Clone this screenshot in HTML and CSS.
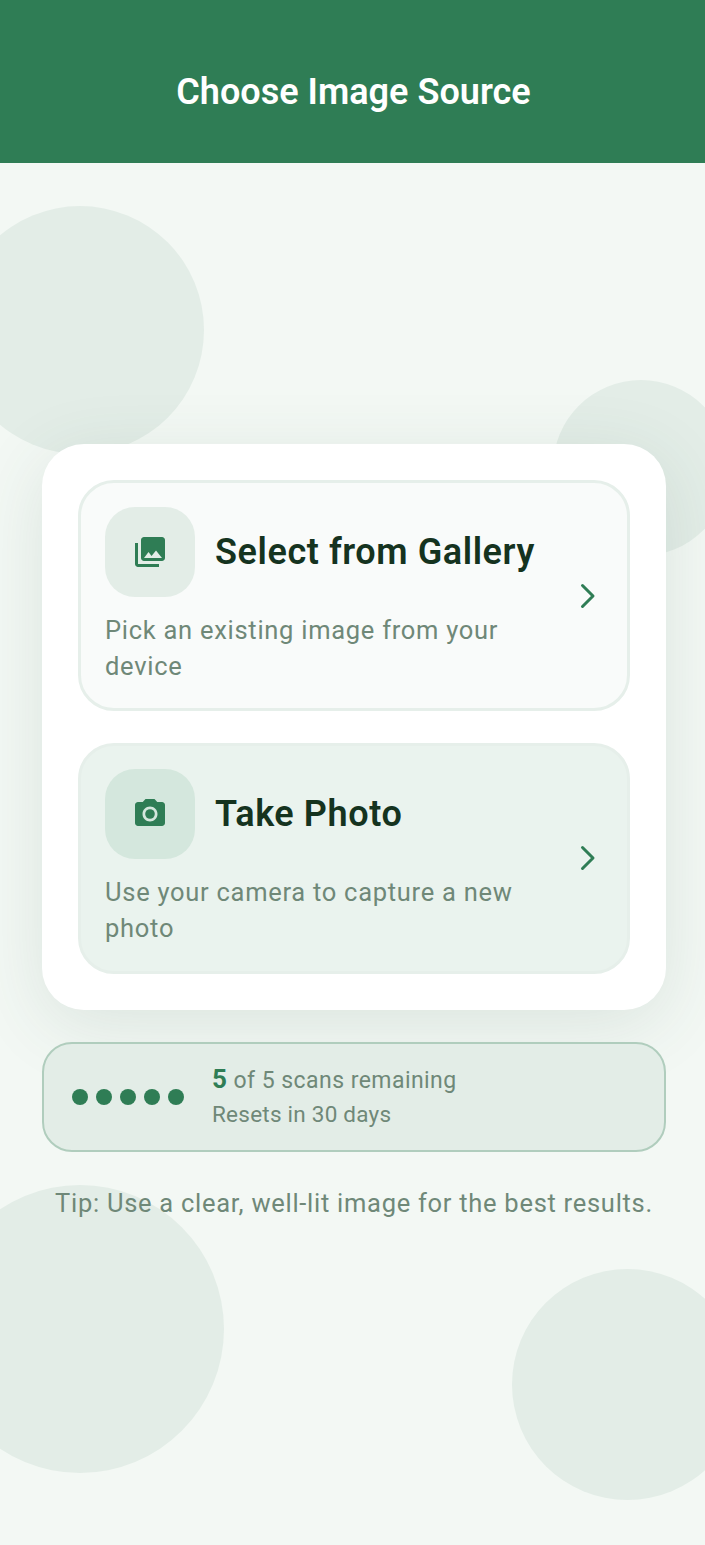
FILE: index.html
```html
<!DOCTYPE html>
<html lang="en">
<head>
<meta charset="utf-8">
<title>Choose Image Source</title>
<link rel="stylesheet" href="styles.css">
</head>
<body>
<div class="screen">
  <header class="appbar"><h1 class="appbar-title">Choose Image Source</h1></header>
  <main class="content">
    <div class="blob blob-a"></div>
    <div class="blob blob-b"></div>
    <div class="blob blob-c"></div>
    <div class="blob blob-d"></div>
    <section class="panel">
      <a class="option option-light">
        <div class="option-body">
          <div class="option-head">
            <div class="tile tile-light">
              <svg class="icon" viewBox="0 0 24 24"><path d="M22 16V4c0-1.100-.9-2-2-2H8c-1.100 0-2 .9-2 2v12c0 1.100.9 2 2 2h12c1.100 0 2-.9 2-2zm-11-4 2.030 2.710L16 11l4 5H8l3-4zM2 6v14c0 1.100.9 2 2 2h14v-2H4V6H2z"/></svg>
            </div>
            <h2 class="option-title">Select from Gallery</h2>
          </div>
          <p class="option-text">Pick an existing image from your device</p>
        </div>
        <svg class="chevron" viewBox="0 0 16 26"><path d="M2.500 2.500 13 13 2.500 23.500"/></svg>
      </a>
      <a class="option option-tint">
        <div class="option-body">
          <div class="option-head">
            <div class="tile tile-tint">
              <svg class="icon" viewBox="0 0 24 24"><circle cx="12" cy="12" r="3.200" class="icon-lens"/><path d="M9 2 7.170 4H4c-1.100 0-2 .9-2 2v12c0 1.100.9 2 2 2h16c1.100 0 2-.9 2-2V6c0-1.100-.9-2-2-2h-3.170L15 2H9zm3 15c-2.760 0-5-2.240-5-5s2.240-5 5-5 5 2.240 5 5-2.240 5-5 5z"/></svg>
            </div>
            <h2 class="option-title">Take Photo</h2>
          </div>
          <p class="option-text">Use your camera to capture a new photo</p>
        </div>
        <svg class="chevron" viewBox="0 0 16 26"><path d="M2.500 2.500 13 13 2.500 23.500"/></svg>
      </a>
    </section>
    <section class="quota">
      <div class="dots"><span class="dot"></span><span class="dot"></span><span class="dot"></span><span class="dot"></span><span class="dot"></span></div>
      <div class="quota-text">
        <p class="quota-main"><strong class="quota-num">5</strong> of 5 scans remaining</p>
        <p class="quota-sub">Resets in 30 days</p>
      </div>
    </section>
    <p class="tip">Tip: Use a clear, well-lit image for the best results.</p>
  </main>
</div>
</body>
</html>
```
FILE: styles.css
```css
* { box-sizing: border-box; }
html, body { margin: 0; padding: 0; }
body { font-family: Roboto, "Noto Sans", sans-serif; background: #f3f8f4; }
h1, h2, p { margin: 0; }

.screen { width: 705px; height: 1545px; display: flex; flex-direction: column; overflow: hidden; }

.appbar { height: 163px; flex: none; background: #2f7d55; display: flex; align-items: center; justify-content: center; padding: 20px 0 0 2px; }
.appbar-title { color: #fff; font-size: 36px; line-height: 42px; font-weight: 600; letter-spacing: .02px; }

.content { position: relative; flex: 1; display: flex; flex-direction: column; padding: 281px 39px 0 42px; }

.blob { position: absolute; border-radius: 50%; background: #e3ede7; }
.blob-a { left: -44px; top: 43px; width: 248px; height: 248px; }
.blob-b { left: 553px; top: 217px; width: 176px; height: 176px; }
.blob-c { left: -64px; top: 1022px; width: 288px; height: 288px; }
.blob-d { left: 512px; top: 1106px; width: 231px; height: 231px; }

.panel { position: relative; background: #fff; border-radius: 42px; padding: 36px; display: flex; flex-direction: column; gap: 31.500px; box-shadow: 0 15px 72px rgba(47, 90, 70, .12); }

.option { display: flex; align-items: center; border-radius: 36px; border: 3px solid #e6efea; padding: 0 24px; height: 231px; }
.option-light { background: #f9fbfa; }
.option-tint { background: #eaf3ee; }
.option-body { flex: 1; min-width: 0; padding-bottom: 1px; }
.option-head { display: flex; align-items: center; gap: 20px; margin-bottom: 15px; }

.tile { width: 90px; height: 90px; border-radius: 30px; display: flex; align-items: center; justify-content: center; flex: none; }
.tile-light { background: #e3ede7; }
.tile-tint { background: #d4e7dd; }
.icon { width: 36px; height: 36px; fill: #2f7d55; }
.icon-lens { fill: #2f7d55; }

.option-title { font-size: 36px; line-height: 42px; font-weight: 600; letter-spacing: .58px; color: #15331f; }
.option-text { font-size: 25.500px; line-height: 36px; letter-spacing: .72px; color: #6f8878; width: 420px; }

.chevron { flex: none; width: 16px; height: 26px; fill: none; stroke: #2f7d55; stroke-width: 3px; stroke-linecap: round; stroke-linejoin: round; margin: 0 7px 0 0; }

.quota { position: relative; margin-top: 32px; height: 110px; background: #e3ede7; border: 2px solid #b0cdbd; border-radius: 30px; display: flex; align-items: center; gap: 28px; padding: 0 0 0 28px; }
.dots { display: flex; gap: 8px; }
.dot { width: 16px; height: 16px; border-radius: 50%; background: #2f7d55; }
.quota-text { padding-bottom: 1px; }
.quota-main { font-size: 23px; line-height: 32px; letter-spacing: .45px; color: #6f8878; }
.quota-num { font-size: 26px; font-weight: 700; color: #2f7d55; }
.quota-sub { font-size: 22.500px; line-height: 32px; letter-spacing: .24px; color: #6f8878; margin-top: 1px; }

.tip { position: relative; margin-top: 33px; text-align: center; font-size: 25.500px; line-height: 36px; letter-spacing: .72px; color: #6f8878; white-space: nowrap; }
```
